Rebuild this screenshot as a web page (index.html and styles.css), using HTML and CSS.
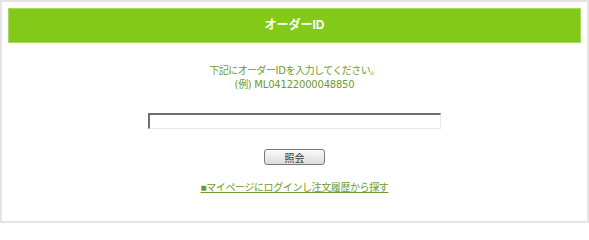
FILE: index.html
```html
<!DOCTYPE html>
<html lang="ja">
<head>
<meta charset="utf-8">
<title>オーダーID</title>
<link rel="stylesheet" href="styles.css">
</head>
<body>
<div class="frame">
  <h1 class="title">オーダーID</h1>
  <div class="content">
    <p class="lead">下記にオーダー<span class="latin">ID</span>を入力してください。<br><span class="latin">(</span>例<span class="latin">) ML04122000048850</span></p>
    <input class="order-input" type="text">
    <button class="submit" type="button">照会</button>
    <a class="mypage" href="#">■マイページにログインし注文履歴から探す</a>
  </div>
</div>
</body>
</html>
```

FILE: styles.css
```css
html, body {
  margin: 0;
  padding: 0;
  background: #fff;
}
.frame {
  width: 589px;
  height: 223px;
  box-sizing: border-box;
  border: 2px solid #e4e4e4;
  padding: 6px;
  font-family: "Liberation Sans", "Noto Sans CJK JP", sans-serif;
}
.title {
  margin: 0;
  height: 35px;
  box-sizing: border-box;
  border: 1px solid #a8d860;
  background: #82c91a;
  color: #fff;
  font-size: 12px;
  font-weight: bold;
  line-height: 33px;
  text-align: center;
}
.content {
  display: flex;
  flex-direction: column;
  align-items: center;
}
.lead {
  margin: 21px 0 0;
  color: #6e9a2b;
  font-size: 10px;
  letter-spacing: -0.55px;
  line-height: 14px;
  text-align: center;
}
.latin {
  font-family: "DejaVu Sans", sans-serif;
  font-size: 10px;
  letter-spacing: -0.2px;
}
.order-input {
  margin-top: 21px;
  width: 293px;
  height: 16px;
  box-sizing: border-box;
  border-style: solid;
  border-width: 2px 1px 1px 2px;
  border-color: #6d6d6d #e8e8e8 #e8e8e8 #6d6d6d;
  padding: 0;
  background: #fff;
}
.submit {
  margin-top: 20px;
  width: 61px;
  height: 16px;
  padding: 0;
  box-sizing: border-box;
  border: 1px solid #7a7a7a;
  border-radius: 3px;
  background: linear-gradient(#fafafa, #dcdcdc);
  color: #333;
  font-family: "Noto Sans CJK JP", sans-serif;
  font-size: 10px;
  line-height: 13px;
}
.mypage {
  margin-top: 16px;
  color: #6e9a2b;
  font-size: 10px;
  letter-spacing: -0.4px;
  line-height: 14px;
  text-decoration: underline;
}
```
